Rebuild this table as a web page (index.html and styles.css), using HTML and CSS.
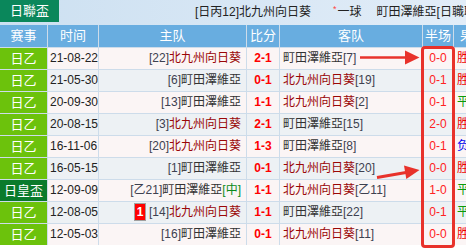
FILE: index.html
```html
<!DOCTYPE html>
<html>
<head>
<meta charset="utf-8">
<link rel="stylesheet" href="styles.css">
</head>
<body>
<div class="page">
  <div class="topbar">
    <div class="tab">日聯盃</div>
    <div class="title"><span class="t-home">[日丙12]北九州向日葵</span><span class="t-mid"><sup class="star">*</sup>一球</span><span class="t-away">町田澤維亞[日職聯7]</span></div>
  </div>
  <div class="grid">
    <div class="hd">赛事</div><div class="hd">时间</div><div class="hd">主队</div><div class="hd">比分</div><div class="hd">客队</div><div class="hd">半场</div><div class="hd hd-res">果</div>

    <div class="lg">日乙</div><div class="c dt o">21-08-22</div><div class="c hm o"><span class="rk">[22]</span><span class="kt">北九州向日葵</span></div><div class="c sc o">2-1</div><div class="c aw o"><span class="md">町田澤維亞</span><span class="rk">[7]</span></div><div class="c hf o">0-0</div><div class="c rs o win">胜</div>

    <div class="lg">日乙</div><div class="c dt e">21-05-30</div><div class="c hm e"><span class="rk">[6]</span><span class="md">町田澤維亞</span></div><div class="c sc e">0-1</div><div class="c aw e"><span class="kt">北九州向日葵</span><span class="rk">[19]</span></div><div class="c hf e">0-1</div><div class="c rs e win">胜</div>

    <div class="lg">日乙</div><div class="c dt o">20-09-30</div><div class="c hm o"><span class="rk">[13]</span><span class="md">町田澤維亞</span></div><div class="c sc o">1-1</div><div class="c aw o"><span class="kt">北九州向日葵</span><span class="rk">[2]</span></div><div class="c hf o">0-1</div><div class="c rs o draw">平</div>

    <div class="lg">日乙</div><div class="c dt e">20-08-15</div><div class="c hm e"><span class="rk">[3]</span><span class="kt">北九州向日葵</span></div><div class="c sc e">2-1</div><div class="c aw e"><span class="md">町田澤維亞</span><span class="rk">[15]</span></div><div class="c hf e">2-0</div><div class="c rs e win">胜</div>

    <div class="lg">日乙</div><div class="c dt o">16-11-06</div><div class="c hm o"><span class="rk">[20]</span><span class="kt">北九州向日葵</span></div><div class="c sc o">1-3</div><div class="c aw o"><span class="md">町田澤維亞</span><span class="rk">[8]</span></div><div class="c hf o">0-1</div><div class="c rs o loss">负</div>

    <div class="lg">日乙</div><div class="c dt e">16-05-15</div><div class="c hm e"><span class="rk">[1]</span><span class="md">町田澤維亞</span></div><div class="c sc e">0-1</div><div class="c aw e"><span class="kt">北九州向日葵</span><span class="rk">[20]</span></div><div class="c hf e">0-0</div><div class="c rs e win">胜</div>

    <div class="lg cup">日皇盃</div><div class="c dt o">12-09-09</div><div class="c hm o"><span class="rk">[乙21]</span><span class="md">町田澤維亞</span><span class="nt">[中]</span></div><div class="c sc o">1-1</div><div class="c aw o"><span class="kt">北九州向日葵</span><span class="rk">[乙11]</span></div><div class="c hf o">1-0</div><div class="c rs o draw">平</div>

    <div class="lg">日乙</div><div class="c dt e">12-08-05</div><div class="c hm e"><span class="badge">1</span><span class="rk">[14]</span><span class="kt">北九州向日葵</span></div><div class="c sc e">1-1</div><div class="c aw e"><span class="md">町田澤維亞</span><span class="rk">[22]</span></div><div class="c hf e">0-1</div><div class="c rs e draw">平</div>

    <div class="lg">日乙</div><div class="c dt o">12-05-03</div><div class="c hm o"><span class="rk">[16]</span><span class="md">町田澤維亞</span></div><div class="c sc o">0-1</div><div class="c aw o"><span class="kt">北九州向日葵</span><span class="rk">[11]</span></div><div class="c hf o">0-0</div><div class="c rs o win">胜</div>
  </div>
  <div class="hl-box"></div>
  <svg class="arrows" width="466" height="249" viewBox="0 0 466 249">
    <line x1="360" y1="57.5" x2="407" y2="57.5" stroke="#e8322b" stroke-width="2.5"/>
    <polygon points="419.5,57.5 405,50.5 405,64.5" fill="#e8322b"/>
    <line x1="377" y1="177.5" x2="406" y2="172.5" stroke="#e8322b" stroke-width="3"/>
    <polygon points="419.5,170 404,165.5 406.3,179" fill="#e8322b"/>
  </svg>
</div>
</body>
</html>
```
FILE: styles.css
```css
html, body {
  margin: 0;
  padding: 0;
  overflow: hidden;
}
body {
  width: 466px;
  height: 249px;
  font-family: "Liberation Sans", "Noto Sans CJK SC", sans-serif;
  font-size: 12px;
  color: #333;
  background: #ffffff;
}
.page {
  position: relative;
  width: 466px;
  height: 249px;
  overflow: hidden;
}
.topbar {
  display: flex;
  height: 25px;
  background: linear-gradient(to right, #cce0f1, #e2edf8);
}
.tab {
  width: 59px;
  height: 22px;
  background: #0a875b;
  color: #fff;
  font-size: 13px;
  line-height: 22px;
  text-align: center;
  flex: none;
}
.title {
  padding-left: 136px;
  white-space: nowrap;
  line-height: 25px;
  height: 25px;
  color: #222;
  font-size: 12px;
}
.t-mid {
  margin-left: 22px;
}
.star {
  color: #f44;
  font-size: 9px;
  vertical-align: 4px;
  line-height: 0;
  margin-right: 1px;
}
.t-away {
  margin-left: 15px;
}
.grid {
  display: grid;
  grid-template-columns: 47px 50px 147px 32px 142px 30px 40px;
  grid-template-rows: 22px repeat(9, 21px);
  gap: 1px;
  background: #cddcea;
  width: 494px;
}
.hd {
  background: #68ade0;
  color: #fff;
  font-size: 13px;
  line-height: 22px;
  text-align: center;
  white-space: nowrap;
}
.hd-res {
  text-align: left;
  padding-left: 6px;
}
.lg {
  background: #6cc20c;
  color: #fff;
  text-align: center;
  line-height: 21px;
  font-size: 13px;
  white-space: nowrap;
}
.lg.cup {
  background: #0b7b2c;
}
.c {
  line-height: 21px;
  white-space: nowrap;
  overflow: hidden;
}
.o { background: #fbf5f5; }
.e { background: #edf1f4; }
.dt {
  padding-left: 2px;
  color: #222;
}
.hm {
  text-align: right;
  padding-right: 5px;
}
.aw {
  text-align: left;
  padding-left: 3px;
}
.rk { color: #3d4150; }
.kt { color: #9a0606; }
.md { color: #333; }
.nt { color: #0a8a1a; }
.sc {
  text-align: center;
  color: #f00;
  font-weight: bold;
}
.hf {
  text-align: center;
  color: #f22;
}
.rs {
  padding-left: 3px;
}
.win { color: #e00; }
.draw { color: #0a9a0a; }
.loss { color: #0000ee; }
.badge {
  display: inline-block;
  width: 10px;
  height: 16px;
  line-height: 16px;
  background: #f00;
  color: #fff;
  font-weight: bold;
  text-align: center;
  border: 1px solid #a0a0a0;
  vertical-align: middle;
  margin-right: 3px;
  margin-top: -2px;
}
.hl-box {
  position: absolute;
  left: 421px;
  top: 46px;
  width: 34px;
  height: 202px;
  box-sizing: border-box;
  border: 3px solid #e8322b;
  border-radius: 4px;
}
.arrows {
  position: absolute;
  left: 0;
  top: 0;
  pointer-events: none;
}
```
